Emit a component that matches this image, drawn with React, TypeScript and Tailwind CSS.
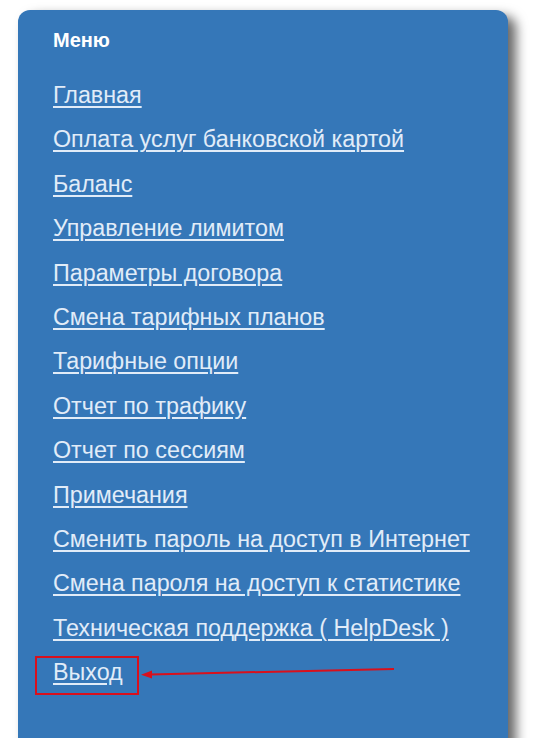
const links = [
  "Главная",
  "Оплата услуг банковской картой",
  "Баланс",
  "Управление лимитом",
  "Параметры договора",
  "Смена тарифных планов",
  "Тарифные опции",
  "Отчет по трафику",
  "Отчет по сессиям",
  "Примечания",
  "Сменить пароль на доступ в Интернет",
  "Смена пароля на доступ к статистике",
  "Техническая поддержка ( HelpDesk )",
];

export default function App() {
  return (
    <div className="h-[738px] overflow-hidden bg-white font-['Liberation_Sans',Arial,sans-serif]">
      <div className="relative ml-[18px] mt-[10px] h-[760px] w-[490px] rounded-[12px] bg-[#3577b8] pl-[35px] pt-[18px] shadow-[8px_6px_12px_rgba(0,0,0,0.6)]">
        <h2 className="text-[20px] font-bold leading-[24px] text-white">Меню</h2>
        <ul className="mt-[21px]">
          {links.map((l) => (
            <li key={l} className="h-[44.4px] text-[23.3px] leading-[44.4px]">
              <a href="#" className="text-[#e1ecf8] underline decoration-2 underline-offset-[3px]">
                {l}
              </a>
            </li>
          ))}
          <li className="relative h-[44.4px] text-[23.3px] leading-[44.4px]">
            <a href="#" className="text-[#e1ecf8] underline decoration-2 underline-offset-[3px]">
              Выход
            </a>
            <span className="absolute left-[-18px] top-[5.5px] h-[39px] w-[104px] border-2 border-[#d9101c]" />
          </li>
        </ul>
        <svg
          className="absolute left-[120px] top-[652px]"
          width="260"
          height="20"
          viewBox="0 0 260 20"
        >
          <line x1="256" y1="7" x2="12" y2="12.5" stroke="#d9101c" strokeWidth="2" />
          <polygon points="3,12.7 14,8.5 14,16.5" fill="#d9101c" />
        </svg>
      </div>
    </div>
  );
}
